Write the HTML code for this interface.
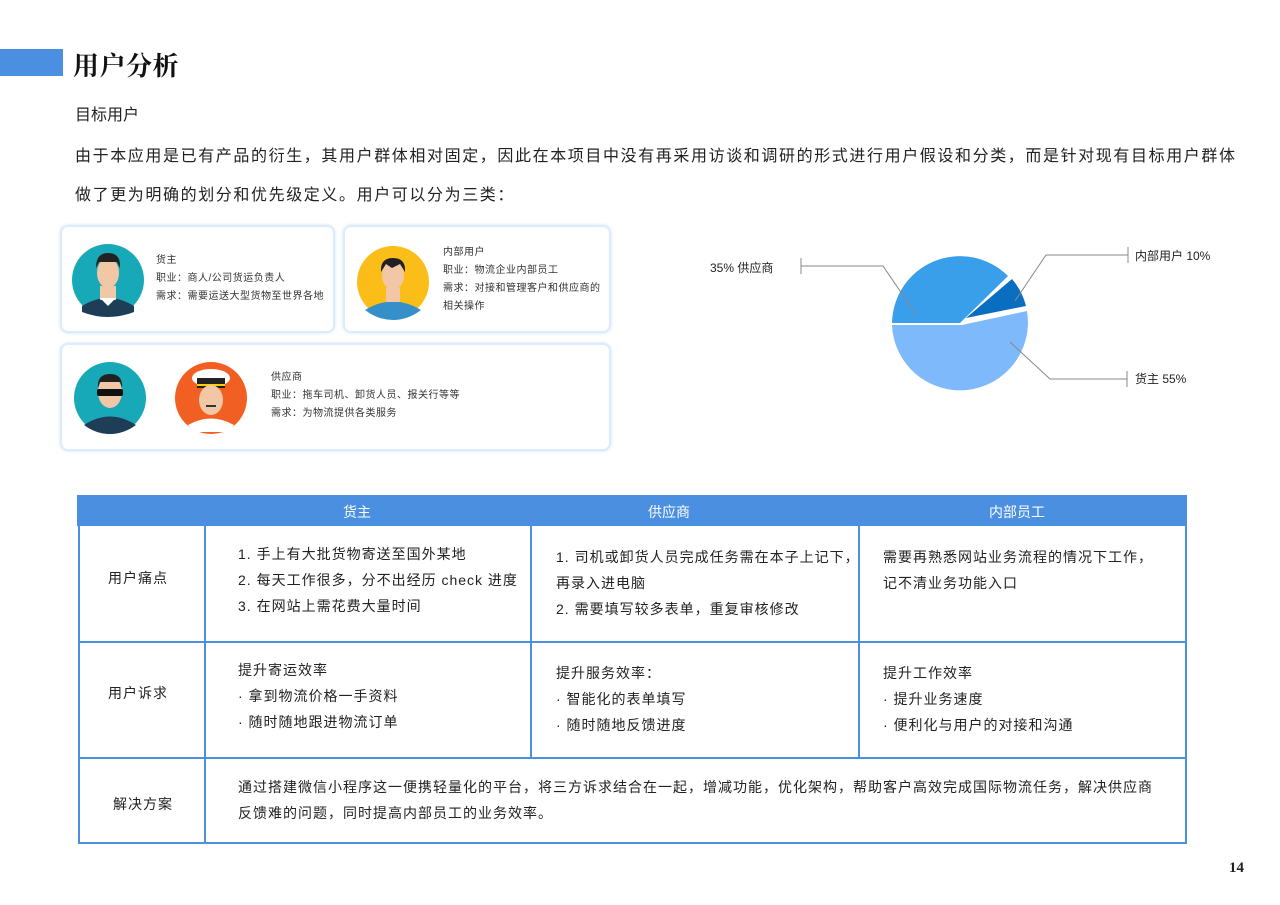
<!DOCTYPE html>
<html><head><meta charset="utf-8"><style>
*{margin:0;padding:0;box-sizing:border-box}
body{width:1280px;height:905px;background:#fff;position:relative;overflow:hidden;font-family:"Liberation Sans","Noto Sans CJK SC",sans-serif;color:#222}
.a{position:absolute;white-space:nowrap}
.card{position:absolute;background:#fff;border:2px solid #dcecfb;border-radius:8px;box-shadow:0 0 3px #cfe4f8}
.s{font-size:10px;line-height:18px;color:#333;letter-spacing:0.5px}
.t{font-size:14px;line-height:26px;color:#222;letter-spacing:1px}
.v{position:absolute;background:#4a8fe0;width:2px}
.h{position:absolute;background:#4a8fe0;height:2px}
</style></head><body>
<div class="a" style="left:0;top:49px;width:63px;height:27px;background:#4a8fe0"></div>
<div class="a" style="left:73px;top:46px;font-size:26px;font-weight:bold;font-family:'Noto Serif CJK SC',serif;color:#111;letter-spacing:0.5px">用户分析</div>
<div class="a" style="left:75px;top:101px;font-size:16px">目标用户</div>
<div class="a" style="left:75px;top:142px;font-size:16px;letter-spacing:1.6px">由于本应用是已有产品的衍生，其用户群体相对固定，因此在本项目中没有再采用访谈和调研的形式进行用户假设和分类，而是针对现有目标用户群体</div>
<div class="a" style="left:75px;top:181px;font-size:16px;letter-spacing:1.6px">做了更为明确的划分和优先级定义。用户可以分为三类：</div>

<div class="card" style="left:60px;top:225px;width:275px;height:108px"></div>
<div class="card" style="left:343px;top:225px;width:268px;height:108px"></div>
<div class="card" style="left:60px;top:343px;width:551px;height:108px"></div>

<svg class="a" style="left:0;top:0" width="640" height="460">
<g><circle cx="108" cy="280" r="36" fill="#17a9b7"/><path d="M82,306 Q108,290 134,306 L134,312 Q108,322 82,312Z" fill="#1e3d57"/><rect x="100" y="286" width="16" height="14" fill="#f2c7a5"/><ellipse cx="108" cy="273" rx="11" ry="15" fill="#f2c7a5"/><path d="M96,268 Q96,253 108,253 Q121,253 120,268 L117,262 L99,262Z" fill="#222"/><path d="M100,298 L108,306 L116,298" fill="#fff"/></g>
<g><circle cx="393" cy="282" r="36" fill="#fbbd18"/><path d="M365,310 Q393,293 421,310 Q408,320 393,320 Q378,320 365,310Z" fill="#3590c9"/><rect x="386" y="288" width="14" height="14" fill="#f2c7a5"/><ellipse cx="393" cy="275" rx="11" ry="15" fill="#f2c7a5"/><path d="M381,272 Q380,258 393,258 Q406,258 405,272 L400,264 L392,268 L386,264Z" fill="#222"/></g>
<g><circle cx="110" cy="398" r="36" fill="#17a9b7"/><path d="M84,425 Q110,408 136,425 Q124,434 110,434 Q96,434 84,425Z" fill="#1e3d57"/><ellipse cx="110" cy="392" rx="12" ry="16" fill="#f2c7a5"/><path d="M98,388 Q97,374 110,374 Q123,374 122,388 L120,382 L100,382Z" fill="#222"/><rect x="97" y="389" width="26" height="7" rx="2" fill="#111"/></g>
<g><circle cx="211" cy="398" r="36" fill="#f25f22"/><ellipse cx="211" cy="378" rx="19" ry="9" fill="#fff"/><rect x="197" y="378" width="28" height="10" fill="#222"/><rect x="197" y="384" width="28" height="2" fill="#f5d100"/><ellipse cx="211" cy="400" rx="12" ry="15" fill="#f2c7a5"/><path d="M188,425 Q211,412 234,425 L228,432 L194,432Z" fill="#fff"/><rect x="206" y="405" width="10" height="2" fill="#333"/></g>
</svg>
<div class="a s" style="left:156px;top:252px">货主<br>职业：商人/公司货运负责人<br>需求：需要运送大型货物至世界各地</div>
<div class="a s" style="left:443px;top:244px">内部用户<br>职业：物流企业内部员工<br>需求：对接和管理客户和供应商的<br>相关操作</div>
<div class="a s" style="left:271px;top:369px">供应商<br>职业：拖车司机、卸货人员、报关行等等<br>需求：为物流提供各类服务</div>

<svg class="a" style="left:700px;top:230px" width="560" height="180">
<g transform="translate(260,93)">
<path d="M0,0 L-68,0 A68,68 0 0 1 48,-47Z" fill="#399fea"/>
<path d="M6,-5 L52,-44 A68,68 0 0 1 66,-17Z" fill="#0a6ec0"/>
<path d="M2,2 L67,-12 A68,68 0 1 1 -68,2Z" fill="#7eb9fb"/>
</g>
<g stroke="#888" fill="none"><path d="M101,28 V44 M101,36 H183 L215,83"/><path d="M428,17 V33 M428,25 H346 L315,71"/><path d="M427,141 V157 M427,149 H350 L310,112"/></g>
<g font-size="12" fill="#222"><text x="10" y="42">35% 供应商</text><text x="435" y="30">内部用户 10%</text><text x="435" y="153">货主 55%</text></g>
</svg>

<div class="a" style="left:77px;top:495px;width:1110px;height:31px;background:#4a8fe0;color:#fff;font-size:14px;line-height:34px">
<span class="a" style="left:266px">货主</span><span class="a" style="left:571px">供应商</span><span class="a" style="left:912px">内部员工</span></div>
<div class="v" style="left:78px;top:526px;height:318px"></div>
<div class="v" style="left:204px;top:526px;height:318px"></div>
<div class="v" style="left:530px;top:526px;height:232px"></div>
<div class="v" style="left:858px;top:526px;height:232px"></div>
<div class="v" style="left:1185px;top:526px;height:318px"></div>
<div class="h" style="left:78px;top:641px;width:1109px"></div>
<div class="h" style="left:78px;top:757px;width:1109px"></div>
<div class="h" style="left:78px;top:842px;width:1109px"></div>
<div class="a t" style="left:108px;top:565px">用户痛点</div>
<div class="a t" style="left:108px;top:680px">用户诉求</div>
<div class="a t" style="left:113px;top:791px">解决方案</div>
<div class="a t" style="left:238px;top:541px">1. 手上有大批货物寄送至国外某地<br>2. 每天工作很多，分不出经历 check 进度<br>3. 在网站上需花费大量时间</div>
<div class="a t" style="left:556px;top:544px">1. 司机或卸货人员完成任务需在本子上记下，<br>再录入进电脑<br>2. 需要填写较多表单，重复审核修改</div>
<div class="a t" style="left:883px;top:544px">需要再熟悉网站业务流程的情况下工作，<br>记不清业务功能入口</div>
<div class="a t" style="left:238px;top:657px">提升寄运效率<br>· 拿到物流价格一手资料<br>· 随时随地跟进物流订单</div>
<div class="a t" style="left:556px;top:660px">提升服务效率：<br>· 智能化的表单填写<br>· 随时随地反馈进度</div>
<div class="a t" style="left:883px;top:660px">提升工作效率<br>· 提升业务速度<br>· 便利化与用户的对接和沟通</div>
<div class="a t" style="left:238px;top:774px">通过搭建微信小程序这一便携轻量化的平台，将三方诉求结合在一起，增减功能，优化架构，帮助客户高效完成国际物流任务，解决供应商<br>反馈难的问题，同时提高内部员工的业务效率。</div>
<div class="a" style="left:1229px;top:860px;font-size:15px;font-weight:bold;font-family:'Liberation Serif',serif">14</div>
</body></html>
